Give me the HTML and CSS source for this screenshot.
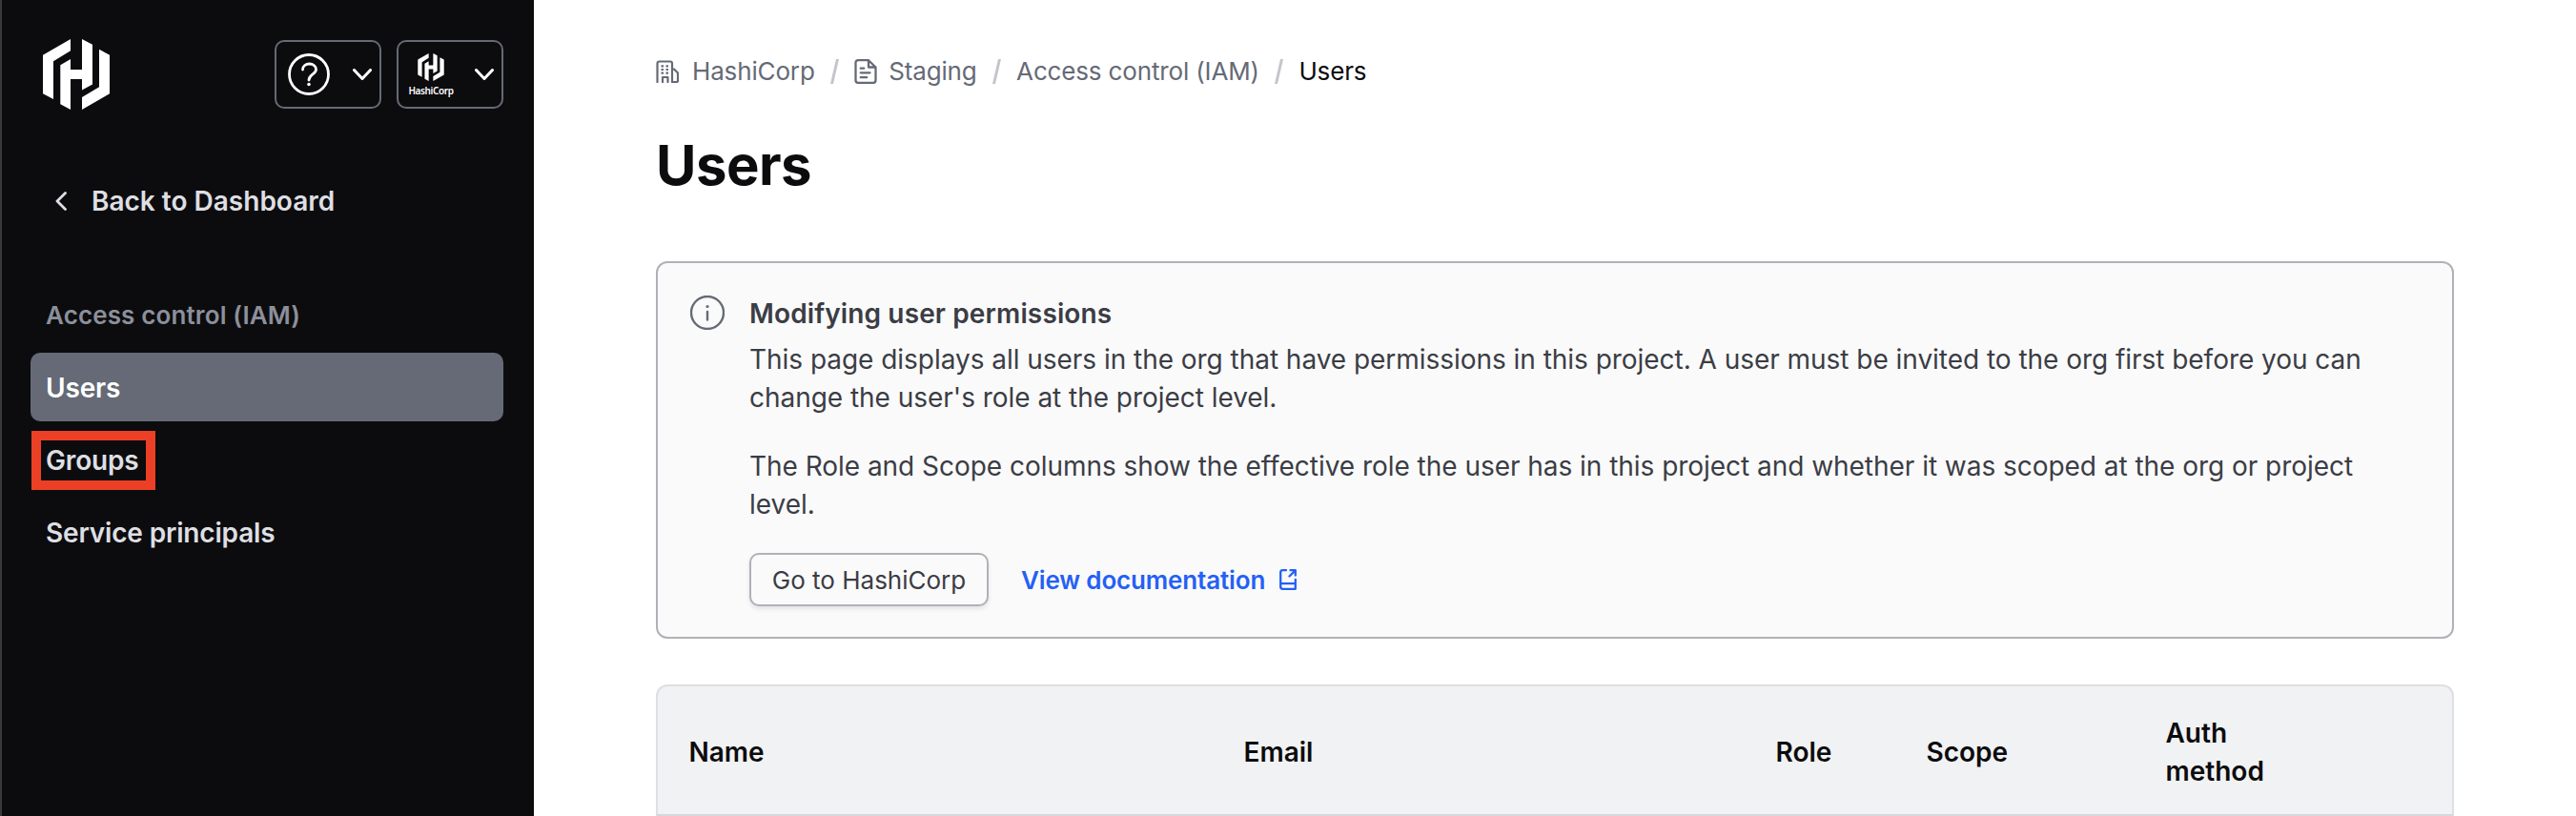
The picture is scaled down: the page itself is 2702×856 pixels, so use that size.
FILE: index.html
```
<!DOCTYPE html>
<html lang="en">
<head>
<meta charset="utf-8">
<title>Users</title>
<link rel="stylesheet" href="styles.css">
</head>
<body>
<svg class="defs" width="0" height="0" aria-hidden="true">
  <symbol id="mark" viewBox="0 0 70 74">
    <path d="M29 0v12.300L11 23.300V63L0 57.300V16.700z M41 0l11 5.700v41.800l-11 6V42H29V74L18.300 68.300V27.300L29 21V32h12z M59 10.700l11 6v40.600L41 74V61L59 50.300z"/>
  </symbol>
</svg>
<div class="app">
  <aside class="sidebar">
    <div class="topbar">
      <svg class="logo"><use href="#mark"/></svg>
      <div class="menus">
        <button class="menu">
          <svg class="help" viewBox="0 0 44 44"><circle cx="22" cy="22" r="20.500"/><path d="M15.500 17c0-8 14-8 14 0 0 5-7.500 5-7.500 11"/><circle class="dot" cx="22" cy="32.500" r="1.800"/></svg>
          <svg class="chev" viewBox="0 0 20 12"><path d="M1.500 1.500L10 10.500l8.500-9"/></svg>
        </button>
        <button class="menu org">
          <span class="brand"><svg class="brand-mark"><use href="#mark"/></svg><span class="brand-name">HashiCorp</span></span>
          <svg class="chev" viewBox="0 0 20 12"><path d="M1.500 1.500L10 10.500l8.500-9"/></svg>
        </button>
      </div>
    </div>
    <a class="back"><svg class="back-icon" viewBox="0 0 12 20"><path d="M10.500 1.500L2 10l8.500 8.500"/></svg><span>Back to Dashboard</span></a>
    <nav class="nav">
      <div class="nav-title">Access control (IAM)</div>
      <a class="nav-item active">Users</a>
      <a class="nav-item marked">Groups</a>
      <a class="nav-item">Service principals</a>
    </nav>
  </aside>
  <main class="main">
    <div class="crumbs">
      <svg class="building" viewBox="0 0 24 24"><path d="M1.500 23V3.500a2 2 0 0 1 2-2h11.500a2 2 0 0 1 2 2V23M17.500 9.500h1.500l4 4v8a1.500 1.500 0 0 1-1.500 1.500H17M7 23v-5h5.500v5"/><path class="dots" d="M5.500 6.300h2.500m2.500 0h2.500M5.500 10h2.500m2.500 0h2.500M5.500 13.700h2.500m2.500 0h2.500"/></svg>
      <span class="crumb">HashiCorp</span><i class="slash"></i>
      <svg class="doc" viewBox="0 0 24 26"><path d="M15 1.200H4a2.500 2.500 0 0 0-2.500 2.500v18.600A2.500 2.500 0 0 0 4 24.800h16a2.500 2.500 0 0 0 2.500-2.500V8.500z M15 1.200V8.500h7.500M6.700 9.700h3.500M6.700 14.300h9.800M6.700 19.200h6.500"/></svg>
      <span class="crumb">Staging</span><i class="slash"></i>
      <span class="crumb">Access control (IAM)</span><i class="slash"></i>
      <span class="crumb current">Users</span>
    </div>
    <h1 class="title">Users</h1>
    <section class="alert">
      <svg class="info" viewBox="0 0 36 36"><circle cx="18" cy="18" r="17"/><path d="M18 17v8.500"/><circle class="dot" cx="18" cy="11.500" r="1.600"/></svg>
      <div class="alert-body">
        <h2 class="alert-title">Modifying user permissions</h2>
        <p>This page displays all users in the org that have permissions in this project. A user must be invited to the org first before you can<br>change the user's role at the project level.</p>
        <p class="second">The Role and Scope columns show the effective role the user has in this project and whether it was scoped at the org or project<br>level.</p>
        <div class="actions">
          <button class="btn">Go to HashiCorp</button>
          <a class="link"><span>View documentation</span><svg class="ext" viewBox="0 0 18 22"><path d="M7 1.200H3.500a2.300 2.300 0 0 0-2.300 2.300v15a2.300 2.300 0 0 0 2.300 2.300H16.800V11M1.200 15.200h15.600M11.500 1.200h5.300v5.300M16.500 1.500L10.500 7.500"/></svg></a>
        </div>
      </div>
    </section>
    <div class="table">
      <div class="th">Name</div><div class="th">Email</div><div class="th">Role</div><div class="th">Scope</div><div class="th">Auth<br>method</div>
    </div>
  </main>
</div>
</body>
</html>
```
FILE: styles.css
```
*, *::after { box-sizing: border-box; }
body { margin: 0; background: #fff; font-family: Inter, sans-serif; font-size: 28px; line-height: 40px; color: #3b3d45; overflow: hidden; }
h1, h2, p { margin: 0; }
button { font: inherit; }
svg { flex: none; display: block; fill: none; stroke-linecap: round; stroke-linejoin: round; }
.defs { position: absolute; }
.app { display: flex; width: 2702px; height: 856px; overflow: hidden; }

.sidebar { width: 560px; flex: none; background: #0c0c0e; border-left: 2px solid #3a3a3c; padding: 41px 32px 0 30px; color: #dedfe3; font-weight: 600; letter-spacing: -0.17px; }
.topbar { display: flex; justify-content: space-between; align-items: flex-start; height: 74px; padding-left: 13px; }
.logo { width: 70px; height: 74px; fill: #fff; }
.menus { display: flex; gap: 16px; padding-top: 1px; }
.menu { width: 112px; height: 72px; display: flex; align-items: center; justify-content: space-between; background: none; border: 2px solid #656a76; border-radius: 10px; padding: 0 8px 0 12px; color: #fff; }
.menu.org { padding-left: 10px; }
.help { width: 44px; height: 44px; stroke: #fff; stroke-width: 2.8; }
.help .dot { fill: #fff; stroke: none; }
.chev { width: 20px; height: 12px; stroke: #fff; stroke-width: 3; }
.brand { display: flex; flex-direction: column; align-items: center; gap: 4px; width: 48px; }
.brand-mark { width: 28px; height: 29px; fill: #fff; }
.brand-name { font: 600 10px/12px "Noto Sans", sans-serif; letter-spacing: -0.4px; }
.back { display: flex; align-items: center; gap: 26px; height: 72px; margin-top: 60px; padding-left: 26px; letter-spacing: 0; }
.back-icon { width: 12px; height: 20px; stroke: #dedfe3; stroke-width: 2.8; }
.nav { display: flex; flex-direction: column; gap: 4px; margin-top: 47px; }
.nav-title { height: 72px; padding: 17px 16px 15px; font-size: 26px; letter-spacing: 0.13px; color: #8c909c; }
.nav-item { position: relative; height: 72px; padding: 17px 16px 15px; border-radius: 10px; }
.nav-item.active { background: #656a76; color: #fff; }
.marked::after { content: ""; position: absolute; left: 1px; top: 6px; width: 130px; height: 62px; border: 10px solid #eb4026; }

.main { flex: 1; padding: 55px 128px 0; }
.crumbs { display: flex; align-items: center; height: 40px; font-size: 26px; color: #656a76; }
.crumb { font-weight: 430; letter-spacing: -0.15px; }
.building { width: 24px; height: 24px; stroke: #656a76; stroke-width: 2.2; margin-right: 14px; }
.building .dots { stroke-linecap: butt; }
.doc { width: 24px; height: 26px; stroke: #656a76; stroke-width: 2.3; margin-right: 12px; }
.slash { width: 2.5px; height: 26px; background: #c2c5cb; transform: skewX(-13deg); margin: 0 19.5px; flex: none; }
.current { color: #0c0c0e; }
.title { margin-top: 38px; font-size: 58px; line-height: 80px; font-weight: 700; letter-spacing: -0.5px; color: #0c0c0e; }
.alert { margin-top: 61px; width: 1886px; height: 396px; display: flex; gap: 26px; padding: 33px 34px; background: #fafafa; border: 2px solid #b0b1b8; border-radius: 12px; }
.info { width: 36px; height: 36px; margin-top: 1px; stroke: #656a76; stroke-width: 2.4; }
.info .dot { fill: #656a76; stroke: none; }
.alert-title { font-size: 28px; line-height: 40px; font-weight: 600; letter-spacing: 0.13px; margin-bottom: 8px; white-space: nowrap; }
.alert p { white-space: nowrap; letter-spacing: -0.035px; }
.alert .second { margin-top: 32px; }
.actions { display: flex; align-items: center; gap: 34px; margin-top: 31px; }
.btn { width: 251px; height: 56px; font-size: 26px; padding: 2px 0 0; white-space: nowrap; color: #3b3d45; background: #fafafa; border: 2px solid #b0b1b8; border-radius: 10px; box-shadow: 0 3px 4px rgba(101,106,118,.15); }
.link { display: flex; align-items: center; gap: 15px; color: #2460f5; font-size: 26px; font-weight: 600; letter-spacing: -0.15px; }
.link span { padding-top: 2px; }
.ext { width: 18px; height: 22px; stroke: #2460f5; stroke-width: 2.3; }
.table { display: grid; grid-template-columns: 582px 558px 158px 251px 1fr; align-items: center; width: 1886px; height: 138px; margin-top: 48px; background: #f1f2f3; border: 2px solid #dedfe3; border-bottom-color: #d5d7db; border-radius: 12px 12px 0 0; color: #0c0c0e; font-weight: 640; }
.th { padding: 3px 0 0 32.5px; }
```
